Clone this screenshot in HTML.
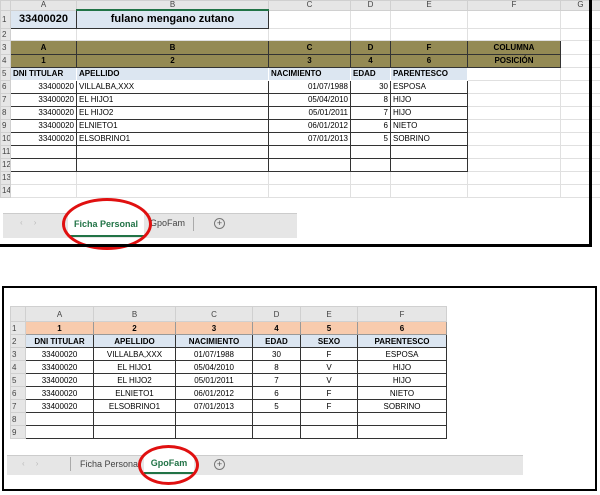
<!DOCTYPE html><html><head><style>
body{margin:0;width:600px;height:495px;background:#fff;position:relative;overflow:hidden;font-family:"Liberation Sans",sans-serif;}
table{border-collapse:collapse;table-layout:fixed;position:absolute;}
td{padding:0 2px;font-size:8px;white-space:nowrap;overflow:hidden;border:1px solid #e0e0e0;line-height:11px;}
.h td{background:#e6e6e6;text-align:center;color:#444;font-size:8px;border-color:#d0d0d0;}
td.rn{background:#e6e6e6;color:#444;font-size:8px;padding:0 1px;border-color:#d0d0d0;}
.d{border:1px solid #333;}
.o{background:#948a54;border:1px solid #333;font-weight:bold;text-align:center;}
.b{background:#dce6f1;font-weight:bold;}
.p{background:#f8cbad;font-weight:bold;text-align:center;border:1px solid #999;}
.r{text-align:right}.c{text-align:center}
.abs{position:absolute}
</style></head><body>
<!-- top sheet -->
<table style="left:0;top:0;width:600px">
<colgroup><col style="width:10px"><col style="width:66px"><col style="width:192px"><col style="width:82px"><col style="width:40px"><col style="width:77px"><col style="width:93px"><col style="width:40px"></colgroup>
<tr class="h" style="height:9px"><td style="line-height:8px"></td><td style="line-height:8px">A</td><td style="line-height:8px;border-bottom:2px solid #217346">B</td><td style="line-height:8px">C</td><td style="line-height:8px">D</td><td style="line-height:8px">E</td><td style="line-height:8px">F</td><td style="line-height:8px">G</td></tr>
<tr style="height:18px"><td class="rn">1</td><td class="d b c" style="font-size:11px">33400020</td><td class="d b c" style="font-size:11px">fulano mengano zutano</td><td></td><td></td><td></td><td></td><td></td></tr>
<tr style="height:12px"><td class="rn">2</td><td></td><td></td><td></td><td></td><td></td><td></td><td></td></tr>
<tr style="height:14px"><td class="rn">3</td><td class="o">A</td><td class="o">B</td><td class="o">C</td><td class="o">D</td><td class="o">F</td><td class="o">COLUMNA</td><td></td></tr>
<tr style="height:13px"><td class="rn">4</td><td class="o">1</td><td class="o">2</td><td class="o">3</td><td class="o">4</td><td class="o">6</td><td class="o">POSICIÓN</td><td></td></tr>
<tr style="height:13px"><td class="rn">5</td><td class="b" style="border:1px solid #fff">DNI TITULAR</td><td class="b" style="border:1px solid #fff">APELLIDO</td><td class="b" style="border:1px solid #fff">NACIMIENTO</td><td class="b" style="border:1px solid #fff">EDAD</td><td class="b" style="border:1px solid #fff">PARENTESCO</td><td></td><td></td></tr>
<tr style="height:13px"><td class="rn">6</td><td class="d r">33400020</td><td class="d">VILLALBA,XXX</td><td class="d r">01/07/1988</td><td class="d r">30</td><td class="d">ESPOSA</td><td></td><td></td></tr>
<tr style="height:13px"><td class="rn">7</td><td class="d r">33400020</td><td class="d">EL HIJO1</td><td class="d r">05/04/2010</td><td class="d r">8</td><td class="d">HIJO</td><td></td><td></td></tr>
<tr style="height:13px"><td class="rn">8</td><td class="d r">33400020</td><td class="d">EL HIJO2</td><td class="d r">05/01/2011</td><td class="d r">7</td><td class="d">HIJO</td><td></td><td></td></tr>
<tr style="height:13px"><td class="rn">9</td><td class="d r">33400020</td><td class="d">ELNIETO1</td><td class="d r">06/01/2012</td><td class="d r">6</td><td class="d">NIETO</td><td></td><td></td></tr>
<tr style="height:13px"><td class="rn">10</td><td class="d r">33400020</td><td class="d">ELSOBRINO1</td><td class="d r">07/01/2013</td><td class="d r">5</td><td class="d">SOBRINO</td><td></td><td></td></tr>
<tr style="height:13px"><td class="rn">11</td><td class="d"></td><td class="d"></td><td class="d"></td><td class="d"></td><td class="d"></td><td></td><td></td></tr>
<tr style="height:13px"><td class="rn">12</td><td class="d"></td><td class="d"></td><td class="d"></td><td class="d"></td><td class="d"></td><td></td><td></td></tr>
<tr style="height:13px"><td class="rn">13</td><td></td><td></td><td></td><td></td><td></td><td></td><td></td></tr>
<tr style="height:13px"><td class="rn">14</td><td></td><td></td><td></td><td></td><td></td><td></td><td></td></tr>
</table>
<div class="abs" style="left:0;top:199px;width:592px;height:46px;background:#fff"></div>
<div class="abs" style="left:3px;top:213px;width:294px;height:24px;background:#e6e6e6;border-top:1px solid #ccc"></div>
<div class="abs" style="left:20px;top:218px;font-size:8px;color:#bbb">‹&nbsp;&nbsp;&nbsp;&nbsp;&nbsp;›</div>
<div class="abs" style="left:68px;top:213px;width:76px;height:22px;background:#fff;border-bottom:2px solid #217346;font-size:9px;font-weight:bold;color:#217346;text-align:center;line-height:22px">Ficha Personal</div>
<div class="abs" style="left:150px;top:218px;font-size:9px;color:#444">GpoFam</div>
<div class="abs" style="left:193px;top:217px;width:1px;height:14px;background:#aaa"></div>
<div class="abs" style="left:214px;top:218px;width:9px;height:9px;border:1px solid #777;border-radius:50%;font-size:9px;line-height:9px;text-align:center;color:#555">+</div>
<div class="abs" style="left:62px;top:198px;width:84px;height:46px;border:3px solid #e01010;border-radius:50%"></div>
<div class="abs" style="left:589px;top:0;width:3px;height:247px;background:#000"></div>
<div class="abs" style="left:0;top:244px;width:592px;height:3px;background:#000"></div>

<!-- bottom sheet -->
<div class="abs" style="left:2px;top:286px;width:591px;height:201px;border:2px solid #000"></div>
<table style="left:10px;top:306px;width:436px">
<colgroup><col style="width:15px"><col style="width:68px"><col style="width:82px"><col style="width:77px"><col style="width:48px"><col style="width:57px"><col style="width:89px"></colgroup>
<tr class="h" style="height:15px"><td></td><td>A</td><td>B</td><td>C</td><td>D</td><td>E</td><td>F</td></tr>
<tr style="height:13px"><td class="rn">1</td><td class="p">1</td><td class="p">2</td><td class="p">3</td><td class="p">4</td><td class="p">5</td><td class="p">6</td></tr>
<tr style="height:13px"><td class="rn">2</td><td class="b c d">DNI TITULAR</td><td class="b c d">APELLIDO</td><td class="b c d">NACIMIENTO</td><td class="b c d">EDAD</td><td class="b c d">SEXO</td><td class="b c d">PARENTESCO</td></tr>
<tr style="height:13px"><td class="rn">3</td><td class="d c">33400020</td><td class="d c">VILLALBA,XXX</td><td class="d c">01/07/1988</td><td class="d c">30</td><td class="d c">F</td><td class="d c">ESPOSA</td></tr>
<tr style="height:13px"><td class="rn">4</td><td class="d c">33400020</td><td class="d c">EL HIJO1</td><td class="d c">05/04/2010</td><td class="d c">8</td><td class="d c">V</td><td class="d c">HIJO</td></tr>
<tr style="height:13px"><td class="rn">5</td><td class="d c">33400020</td><td class="d c">EL HIJO2</td><td class="d c">05/01/2011</td><td class="d c">7</td><td class="d c">V</td><td class="d c">HIJO</td></tr>
<tr style="height:13px"><td class="rn">6</td><td class="d c">33400020</td><td class="d c">ELNIETO1</td><td class="d c">06/01/2012</td><td class="d c">6</td><td class="d c">F</td><td class="d c">NIETO</td></tr>
<tr style="height:13px"><td class="rn">7</td><td class="d c">33400020</td><td class="d c">ELSOBRINO1</td><td class="d c">07/01/2013</td><td class="d c">5</td><td class="d c">F</td><td class="d c">SOBRINO</td></tr>
<tr style="height:13px"><td class="rn">8</td><td class="d"></td><td class="d"></td><td class="d"></td><td class="d"></td><td class="d"></td><td class="d"></td></tr>
<tr style="height:13px"><td class="rn">9</td><td class="d"></td><td class="d"></td><td class="d"></td><td class="d"></td><td class="d"></td><td class="d"></td></tr>
</table>
<div class="abs" style="left:7px;top:455px;width:516px;height:19px;background:#e6e6e6;border-top:1px solid #ccc"></div>
<div class="abs" style="left:22px;top:459px;font-size:8px;color:#bbb">‹&nbsp;&nbsp;&nbsp;&nbsp;&nbsp;›</div>
<div class="abs" style="left:70px;top:457px;width:1px;height:14px;background:#aaa"></div>
<div class="abs" style="left:80px;top:459px;font-size:9px;color:#444">Ficha Personal</div>
<div class="abs" style="left:144px;top:455px;width:50px;height:17px;background:#fff;border-bottom:2px solid #217346;font-size:9px;font-weight:bold;color:#217346;text-align:center;line-height:17px">GpoFam</div>
<div class="abs" style="left:214px;top:459px;width:9px;height:9px;border:1px solid #777;border-radius:50%;font-size:9px;line-height:9px;text-align:center;color:#555">+</div>
<div class="abs" style="left:138px;top:445px;width:55px;height:34px;border:3px solid #e01010;border-radius:50%"></div>
</body></html>
